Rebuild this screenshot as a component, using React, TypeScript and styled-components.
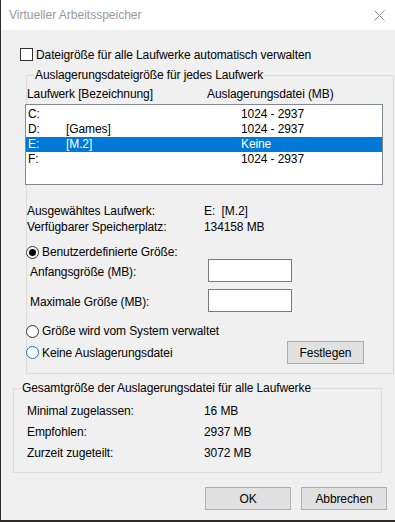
import React from 'react';
import styled, { createGlobalStyle } from 'styled-components';

const Global = createGlobalStyle`
  html, body { margin: 0; padding: 0; background: #3b2621; }
  body { font-family: "Liberation Sans", Arial, sans-serif; font-size: 12px; color: #000; letter-spacing: -0.1px; }
  * { box-sizing: border-box; }
`;

const Window = styled.div`
  width: 395px;
  height: 521px;
  border-left: 1px solid #2b2b2b;
  border-bottom: 1px solid #2b2b2b;
  background: #f0f0f0;
  display: flex;
  flex-direction: column;
`;

const TitleBar = styled.div`
  height: 30px;
  flex: none;
  background: #fff;
  display: flex;
  align-items: center;
  justify-content: space-between;
  padding: 0 10px 0 8px;
  color: #999;
  letter-spacing: 0;
`;

const Body = styled.div`
  display: flex;
  flex-direction: column;
`;

const CheckRow = styled.label`
  display: flex;
  align-items: center;
  gap: 3px;
  height: 13px;
  margin: 18px 0 0 19px;
`;

const CheckBox = styled.span`
  width: 13px;
  height: 13px;
  border: 1px solid #333;
  background: #fff;
`;

const Group = styled.fieldset<{ $left: number; $width: number; $top: number }>`
  margin: ${p => p.$top}px 0 0 ${p => p.$left}px;
  width: ${p => p.$width}px;
  min-width: 0;
  padding: 0 0 9px 0;
  border: 1px solid #dcdcdc;
  display: flex;
  flex-direction: column;
`;

const Legend = styled.legend`
  margin-left: 7px;
  padding: 0 1px;
  line-height: 15px;
  height: 15px;
`;

const HeaderRow = styled.div`
  display: grid;
  grid-template-columns: 180px 1fr;
  line-height: 15px;
  margin-top: 4px;
`;

const ListBox = styled.div`
  margin: 2px 0 0 -2px;
  width: 358px;
  height: 81px;
  border: 1px solid #828790;
  background: #fff;
  padding-top: 2px;
`;

const ListRow = styled.div<{ $selected?: boolean }>`
  display: grid;
  grid-template-columns: 38px 175px 1fr;
  height: 15px;
  line-height: 15px;
  padding-left: 2px;
  background: ${p => (p.$selected ? '#0078d7' : 'transparent')};
  color: ${p => (p.$selected ? '#fff' : '#000')};
`;

const InfoGrid = styled.div<{ $col: number; $lh: number; $top: number; $pad: number }>`
  display: grid;
  grid-template-columns: ${p => p.$col}px 1fr;
  grid-auto-rows: ${p => p.$lh}px;
  align-items: center;
  margin-top: ${p => p.$top}px;
  padding-left: ${p => p.$pad}px;
`;

const RadioRow = styled.label<{ $top: number; $width?: number }>`
  display: flex;
  align-items: center;
  gap: 3px;
  height: 14px;
  margin: ${p => p.$top}px 0 0 -1px;
  ${p => (p.$width ? `width: ${p.$width}px; flex: none;` : '')}
`;

const Radio = styled.span<{ $checked?: boolean; $focus?: boolean }>`
  width: 13px;
  height: 13px;
  border-radius: 50%;
  border: 1px solid ${p => (p.$focus ? '#0078d7' : '#333')};
  background: #fff;
  display: flex;
  align-items: center;
  justify-content: center;
  flex: none;
  &::after {
    content: '';
    display: ${p => (p.$checked ? 'block' : 'none')};
    width: 7px;
    height: 7px;
    border-radius: 50%;
    background: #000;
  }
`;

const SizeRow = styled.div<{ $top: number }>`
  display: grid;
  grid-template-columns: 178px 84px;
  align-items: center;
  margin: ${p => p.$top}px 0 0 3px;
  height: 23px;
`;

const SizeLabel = styled.span`
  padding-top: 3px;
`;

const TextInput = styled.div`
  width: 84px;
  height: 23px;
  border: 1px solid #7a7a7a;
  background: #fff;
`;

const ActionRow = styled.div`
  display: flex;
  align-items: center;
  margin-top: 3px;
  height: 23px;
`;

const Button = styled.button<{ $width: number }>`
  width: ${p => p.$width}px;
  height: 23px;
  padding: 0;
  border: 1px solid #adadad;
  background: #e1e1e1;
  font-family: inherit;
  font-size: 12px;
  letter-spacing: inherit;
  color: #000;
  flex: none;
`;

const ButtonRow = styled.div`
  display: flex;
  gap: 10px;
  margin: 14px 0 0 204px;
`;

const CloseIcon = () => (
  <svg width="11" height="11" viewBox="0 0 11 11">
    <path d="M0.5 0.5 L10.5 10.5 M10.5 0.5 L0.5 10.5" stroke="#8a8a8a" strokeWidth="1" fill="none" />
  </svg>
);

const drives = [
  { d: 'C:', n: '', s: '1024 - 2937' },
  { d: 'D:', n: '[Games]', s: '1024 - 2937' },
  { d: 'E:', n: '[M.2]', s: 'Keine', sel: true },
  { d: 'F:', n: '', s: '1024 - 2937' },
];

export default function App() {
  return (
    <>
      <Global />
      <Window>
        <TitleBar>
          <span>Virtueller Arbeitsspeicher</span>
          <CloseIcon />
        </TitleBar>
        <Body>
          <CheckRow>
            <CheckBox />
            <span>Dateigröße für alle Laufwerke automatisch verwalten</span>
          </CheckRow>

          <Group $left={25} $width={368} $top={7}>
            <Legend>Auslagerungsdateigröße für jedes Laufwerk</Legend>
            <HeaderRow>
              <span>Laufwerk [Bezeichnung]</span>
              <span>Auslagerungsdatei (MB)</span>
            </HeaderRow>
            <ListBox>
              {drives.map(r => (
                <ListRow key={r.d} $selected={r.sel}>
                  <span>{r.d}</span>
                  <span>{r.n}</span>
                  <span>{r.s}</span>
                </ListRow>
              ))}
            </ListBox>
            <InfoGrid $col={177} $lh={16} $top={18} $pad={0}>
              <span>Ausgewähltes Laufwerk:</span>
              <span>E:&nbsp;&nbsp;[M.2]</span>
              <span>Verfügbarer Speicherplatz:</span>
              <span>134158 MB</span>
            </InfoGrid>
            <RadioRow $top={10}>
              <Radio $checked />
              <span>Benutzerdefinierte Größe:</span>
            </RadioRow>
            <SizeRow $top={0}>
              <SizeLabel>Anfangsgröße (MB):</SizeLabel>
              <TextInput />
            </SizeRow>
            <SizeRow $top={7}>
              <SizeLabel>Maximale Größe (MB):</SizeLabel>
              <TextInput />
            </SizeRow>
            <RadioRow $top={12}>
              <Radio />
              <span>Größe wird vom System verwaltet</span>
            </RadioRow>
            <ActionRow>
              <RadioRow $top={0} $width={261}>
                <Radio $focus />
                <span>Keine Auslagerungsdatei</span>
              </RadioRow>
              <Button $width={77}>Festlegen</Button>
            </ActionRow>
          </Group>

          <Group $left={12} $width={369} $top={7}>
            <Legend>Gesamtgröße der Auslagerungsdatei für alle Laufwerke</Legend>
            <InfoGrid $col={177} $lh={21} $top={4} $pad={13}>
              <span>Minimal zugelassen:</span>
              <span>16 MB</span>
              <span>Empfohlen:</span>
              <span>2937 MB</span>
              <span>Zurzeit zugeteilt:</span>
              <span>3072 MB</span>
            </InfoGrid>
          </Group>

          <ButtonRow>
            <Button $width={86}>OK</Button>
            <Button $width={86}>Abbrechen</Button>
          </ButtonRow>
        </Body>
      </Window>
    </>
  );
}
